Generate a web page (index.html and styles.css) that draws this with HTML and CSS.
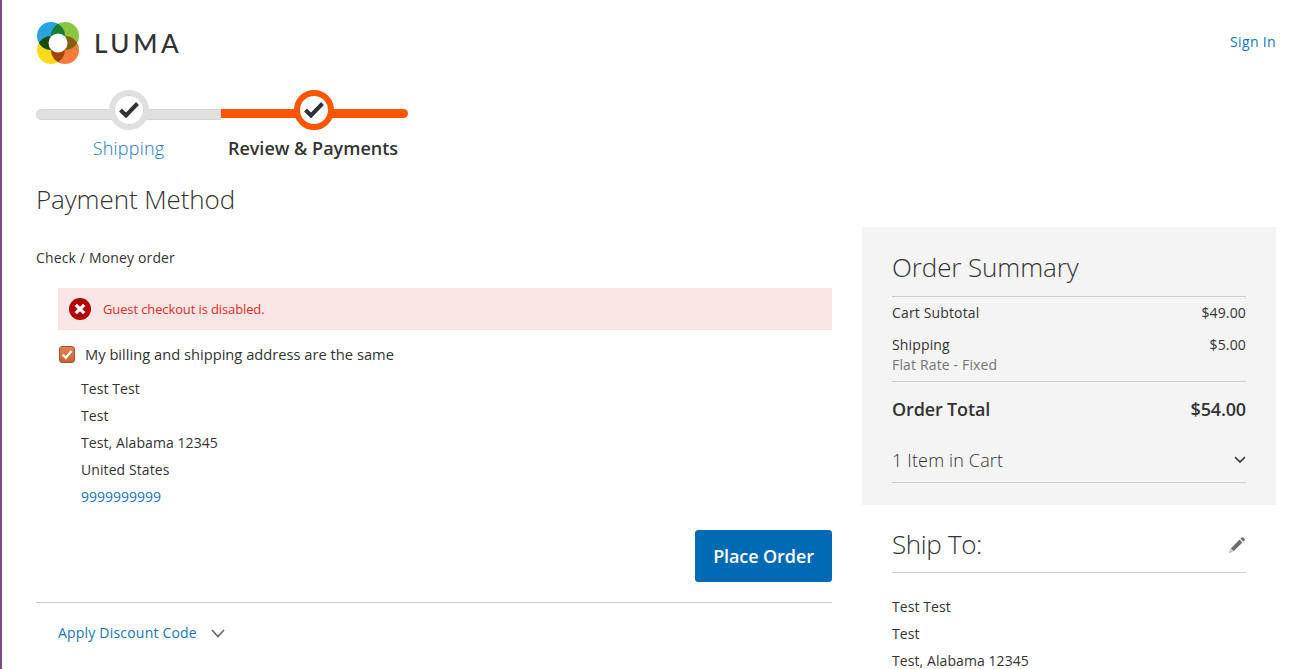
FILE: index.html
```html
<!DOCTYPE html>
<html lang="en">
<head>
<meta charset="UTF-8">
<title>Checkout</title>
<link rel="stylesheet" href="styles.css">
</head>
<body>
<div class="page">
    <header class="header">
        <a class="logo" href="#">
            <svg class="logo-mark" width="44" height="44" viewBox="0 0 44 44">
                <circle class="petal" cx="15" cy="15" r="14" fill="#27a4dd"/>
                <circle class="petal" cx="29" cy="15" r="14" fill="#8cc63f"/>
                <circle class="petal" cx="15" cy="29" r="14" fill="#ffd91c"/>
                <circle class="petal" cx="29" cy="29" r="14" fill="#f47b3c"/>
                <path class="petal" d="M2.9 22 A14 14 0 0 1 27.1 22 A14 14 0 0 1 2.9 22 Z" fill="#8a8a8a"/>
                <path class="petal" d="M22 16.9 A14 14 0 0 1 22 41.1 A14 14 0 0 1 22 16.9 Z" fill="#a8a8a8"/>
                <circle cx="22" cy="22" r="9.5" fill="#fff"/>
            </svg>
            <span class="logo-text">LUMA</span>
        </a>
        <a class="sign-in" href="#">Sign In</a>
    </header>

    <ul class="steps">
        <li class="step step-done">
            <span class="step-dot">
                <svg width="20" height="16" viewBox="0 0 20 16"><path d="M1.5 8 L7 13.5 L18.5 1.5" fill="none" stroke="#2f3338" stroke-width="4"/></svg>
            </span>
            <a class="step-title" href="#">Shipping</a>
        </li>
        <li class="step step-active">
            <span class="step-dot">
                <svg width="20" height="16" viewBox="0 0 20 16"><path d="M1.5 8 L7 13.5 L18.5 1.5" fill="none" stroke="#2f3338" stroke-width="4"/></svg>
            </span>
            <span class="step-title">Review &amp; Payments</span>
        </li>
    </ul>

    <div class="columns">
        <main class="main">
            <h2 class="main-title">Payment Method</h2>
            <div class="method-name">Check / Money order</div>
            <div class="method-body">
                <div class="error">
                    <svg class="error-icon" width="22" height="22" viewBox="0 0 22 22">
                        <circle cx="11" cy="11" r="11" fill="#b30000"/>
                        <path d="M6.8 6.8 L15.2 15.2 M15.2 6.8 L6.8 15.2" stroke="#fff" stroke-width="3.2"/>
                    </svg>
                    <span>Guest checkout is disabled.</span>
                </div>
                <label class="same-address">
                    <span class="checkbox">
                        <svg width="12" height="11" viewBox="0 0 12 11"><path d="M1.5 5.5 L4.8 8.8 L10.5 2" fill="none" stroke="#fff" stroke-width="2.4"/></svg>
                    </span>
                    My billing and shipping address are the same
                </label>
                <address class="address">
                    Test Test<br>
                    Test<br>
                    Test, Alabama 12345<br>
                    United States<br>
                    <a href="#">9999999999</a>
                </address>
                <div class="actions">
                    <button class="place-order" type="button">Place Order</button>
                </div>
            </div>
            <div class="discount">
                <a href="#">Apply Discount Code</a>
                <svg class="chevron" width="14" height="9" viewBox="0 0 14 9"><path d="M1 1 L7 7.5 L13 1" fill="none" stroke="#666" stroke-width="1.6"/></svg>
            </div>
        </main>

        <aside class="sidebar">
            <section class="summary">
                <h2 class="summary-title">Order Summary</h2>
                <div class="totals">
                    <div class="row"><span>Cart Subtotal</span><span>$49.00</span></div>
                    <div class="row row-ship">
                        <span>Shipping<small>Flat Rate - Fixed</small></span>
                        <span>$5.00</span>
                    </div>
                    <div class="row row-total"><span>Order Total</span><span>$54.00</span></div>
                </div>
                <div class="cart-items">
                    <span>1 Item in Cart</span>
                    <svg width="12" height="8" viewBox="0 0 12 8"><path d="M1 1 L6 6 L11 1" fill="none" stroke="#333" stroke-width="1.6"/></svg>
                </div>
            </section>
            <section class="ship-to">
                <div class="ship-head">
                    <h2 class="ship-title">Ship To:</h2>
                    <svg class="edit-icon" width="18" height="18" viewBox="0 0 18 18">
                        <path d="M5.6 15.2 L2.8 12.4 L11.6 3.6 L14.4 6.4 Z" fill="#6e6e6e"/>
                        <path d="M12.4 2.8 L13.6 1.6 Q14.4 0.9 15.2 1.6 L16.4 2.8 Q17.1 3.6 16.4 4.4 L15.2 5.6 Z" fill="#6e6e6e"/>
                        <path d="M1 17 L2.2 13 L5 15.8 Z" fill="#b9b9b9"/>
                    </svg>
                </div>
                <address class="address">
                    Test Test<br>
                    Test<br>
                    Test, Alabama 12345
                </address>
            </section>
        </aside>
    </div>
</div>
</body>
</html>
```

FILE: styles.css
```css
*{
    margin:0;
    padding:0;
    box-sizing:border-box;
    list-style:none;
}
html,body{
    height:100%;
    overflow:hidden;
}
body{
    font-family:"Open Sans",sans-serif;
    font-size:14px;
    line-height:20px;
    color:#333;
    background:#fff;
}
a{
    color:#1276be;
    text-decoration:none;
}
address{
    font-style:normal;
}
.page{
    height:100%;
    padding:0 34px;
    border-left:2px solid #7b4a80;
}
.header{
    display:flex;
    justify-content:space-between;
    align-items:center;
    height:90px;
    padding-bottom:4px;
}
.logo{
    display:flex;
    align-items:center;
    gap:14px;
}
.logo-mark{
    isolation:isolate;
}
.petal{
    mix-blend-mode:multiply;
}
.logo-text{
    font-family:"Lato",sans-serif;
    font-size:26px;
    letter-spacing:3.6px;
    font-weight:500;
    color:#333;
}
.sign-in{
    letter-spacing:0.35px;
    margin-bottom:2px;
}

/* progress bar */
.steps{
    display:flex;
    height:89px;
}
.step{
    position:relative;
    width:185px;
    padding-top:46px;
    text-align:center;
    font-size:18px;
    line-height:24px;
}
.step-active{
    width:187px;
    padding-right:3px;
}
.step::before{
    content:"";
    position:absolute;
    left:0;
    right:0;
    top:19px;
    height:9px;
}
.step-done::before{
    background:#e0e0e0;
    border:1px solid #d4d4d4;
    border-radius:5px 0 0 5px;
}
.step-active::before{
    background:#ff5501;
    border-radius:0 5px 5px 0;
}
.step-dot{
    position:absolute;
    top:0;
    left:73px;
    width:40px;
    height:40px;
    border-radius:50%;
    background:#fff;
    display:flex;
    align-items:center;
    justify-content:center;
}
.step-done .step-dot{
    border:5px solid #e0e0e0;
    box-shadow:inset 0 0 0 1px #d4d4d4;
}
.step-active .step-dot{
    border:6px solid #ff5501;
}
.step-done .step-title{
    color:#1979c3;
    font-weight:300;
    letter-spacing:0.2px;
}
.step-active .step-title{
    font-weight:600;
}

.columns{
    display:flex;
    justify-content:space-between;
}
.main{
    width:796px;
}
.main-title{
    font-size:26px;
    line-height:32px;
    font-weight:300;
    letter-spacing:-0.1px;
    padding-top:4px;
}
.method-name{
    margin-top:33px;
    letter-spacing:0.15px;
}
.method-body{
    padding-left:22px;
}
.error{
    display:flex;
    align-items:center;
    gap:12px;
    height:42px;
    margin-top:20px;
    padding-left:11px;
    background:#fae5e5;
    color:#e02b27;
    font-size:13px;
    letter-spacing:-0.12px;
}
.same-address{
    display:flex;
    align-items:center;
    gap:10px;
    margin-top:14px;
    font-size:14.7px;
}
.checkbox{
    width:16px;
    height:17px;
    margin-left:1px;
    border:1px solid #a9552f;
    border-radius:3px;
    background:linear-gradient(#e57e4e,#c8643a);
    display:flex;
    align-items:center;
    justify-content:center;
}
.address{
    line-height:27px;
    letter-spacing:0.08px;
}
.address a{
    letter-spacing:0;
}
.method-body .address{
    margin-top:11px;
    padding-left:23px;
}
.actions{
    display:flex;
    justify-content:flex-end;
    margin-top:20px;
}
.place-order{
    width:137px;
    height:52px;
    background:#006bb4;
    border:1px solid #006bb4;
    border-radius:3px;
    color:#fff;
    font-family:inherit;
    font-size:18px;
    font-weight:600;
    letter-spacing:-0.1px;
}
.discount{
    display:flex;
    align-items:center;
    gap:14px;
    margin-top:20px;
    padding:20px 0 0 22px;
    border-top:1px solid #ccc;
    letter-spacing:0.2px;
}

/* sidebar */
.sidebar{
    width:414px;
}
.summary{
    background:#f4f4f4;
    height:278px;
    margin-top:48px;
    padding:22px 30px 0;
}
.summary-title{
    font-size:26px;
    line-height:36px;
    font-weight:300;
    letter-spacing:-0.1px;
}
.totals{
    margin-top:11px;
    border-top:1px solid #ccc;
    letter-spacing:0.15px;
}
.row{
    display:flex;
    justify-content:space-between;
    padding-top:6px;
}
.row small{
    display:block;
    font-size:14px;
    color:#757575;
}
.row-ship{
    padding-top:12px;
    padding-bottom:6px;
    border-bottom:1px solid #ccc;
}
.row-total{
    font-size:18px;
    font-weight:600;
    line-height:26px;
    padding-top:14px;
    letter-spacing:-0.15px;
}
.cart-items{
    display:flex;
    justify-content:space-between;
    align-items:center;
    height:46px;
    margin-top:15px;
    font-size:18px;
    font-weight:300;
    letter-spacing:0.15px;
    border-bottom:1px solid #ccc;
}
.ship-to{
    padding:0 30px;
}
.ship-head{
    display:flex;
    justify-content:space-between;
    align-items:center;
    height:68px;
    padding-top:10px;
    border-bottom:1px solid #ccc;
}
.ship-title{
    font-size:26px;
    font-weight:300;
    letter-spacing:-0.35px;
}
.edit-icon{
    margin-top:3px;
}
.ship-to .address{
    margin-top:20px;
}
```
